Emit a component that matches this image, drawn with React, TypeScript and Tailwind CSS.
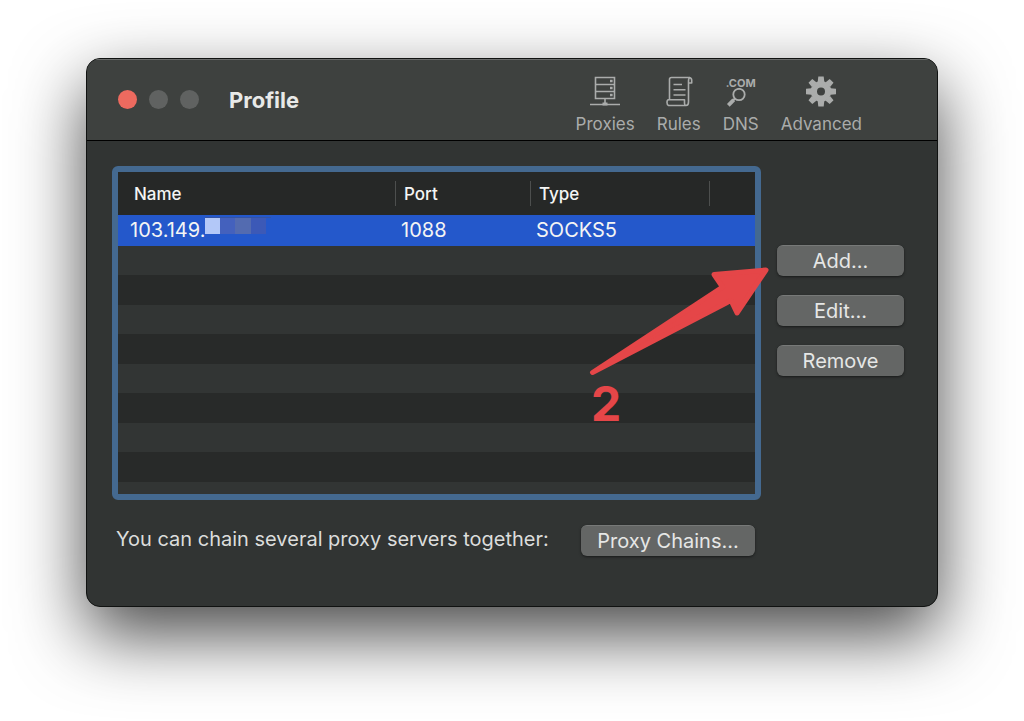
import type { ReactNode } from "react";

/* ─── Data ─────────────────────────────────────────────────────────── */
interface Proxy {
  name: string;
  port: number;
  type: string;
}

const proxies: Proxy[] = [{ name: "103.149.", port: 1088, type: "SOCKS5" }];

/* ─── Toolbar icons ────────────────────────────────────────────────── */
function ServerIcon() {
  return (
    <svg viewBox="0 0 32 32" className="h-8 w-8" fill="none" stroke="currentColor" strokeWidth="1.6" aria-hidden="true">
      <path d="M6.5 2.5h19v21h-19zM6.5 9.5h19M6.5 16.5h19" />
      <path d="M16 23.5v5M1 29.5h30" />
      <path d="M21 6h2.6M21 13h2.6M21 20h2.6" strokeWidth="2.6" />
      <path d="M13.5 29h5" strokeWidth="3" />
    </svg>
  );
}

function ScrollIcon() {
  return (
    <svg viewBox="0 0 32 32" className="h-8 w-8" fill="none" stroke="currentColor" strokeWidth="1.6" strokeLinejoin="round" aria-hidden="true">
      <path d="M6.5 24.5V4.5q0-2 2-2H26.5q2.2.4 2.2 2.8V8H25.500" />
      <path d="M27 2.5Q25.500 3 25.500 6v21q0 3.500-2.500 3.500H5.500Q4 30 4 27.500t1.500-2.700H21.500v3.500q.3 2.200 1.500 2.200" />
      <path d="M10.500 9.500h8.500M10.500 14.800h12M10.500 20h12" />
    </svg>
  );
}

function DnsIcon() {
  return (
    <span className="flex h-8 w-8 flex-col items-center">
      <span className="pt-[3px] text-[11px] leading-[10px] font-bold">.COM</span>
      <svg viewBox="0 0 32 20" className="h-5 w-8 shrink-0" fill="none" stroke="currentColor" aria-hidden="true">
        <circle cx="14" cy="6.500" r="5.700" strokeWidth="1.800" />
        <path d="M10 10.500l-2 2" strokeWidth="2.200" />
        <path d="M8.700 11.800L3.300 17.300" strokeWidth="3.800" />
      </svg>
    </span>
  );
}

const teeth = [0, 45, 90, 135, 180, 225, 270, 315];

function GearIcon() {
  return (
    <svg viewBox="0 0 32 32" className="h-8 w-8" fill="currentColor" aria-hidden="true">
      <circle cx="16" cy="16.500" r="7.200" fill="none" stroke="currentColor" strokeWidth="6.400" />
      {teeth.map((angle) => (
        <path key={angle} d="M13.300 1.500h5.400l.6 5.500h-6.600z" transform={`rotate(${angle} 16 16.500)`} />
      ))}
    </svg>
  );
}

/* ─── Controls ─────────────────────────────────────────────────────── */
function ToolbarButton({ label, children }: { label: string; children: ReactNode }) {
  return (
    <button type="button" className="flex flex-col items-center gap-[7px] text-[17px] leading-5 text-[#aaacab]">
      {children}
      {label}
    </button>
  );
}

function PushButton({ className, children }: { className: string; children: ReactNode }) {
  return (
    <button
      type="button"
      className={`h-[31px] rounded-md border-t border-[#777978] bg-[#646665] text-xl leading-7 text-[#e6e7e6] shadow-sm shadow-black/40 ${className}`}
    >
      {children}
    </button>
  );
}

function HeaderCell({ className, children }: { className: string; children?: ReactNode }) {
  return (
    <th scope="col" className={`p-0 text-left font-medium ${className}`}>
      <div className="border-r border-[#4d4f4e] pt-[2px] leading-[23px]">{children}</div>
    </th>
  );
}

/* Pixelated patch that hides the rest of the address */
function Mosaic() {
  return (
    <span className="flex h-[17px] w-[66px] border-t border-[#3453a5]" aria-hidden="true">
      <span className="h-4 w-[15px] bg-[#b3c8f8]" />
      <span className="h-4 w-[15px] bg-[#4461bd]" />
      <span className="h-4 w-[16px] bg-[#536bb0]" />
      <span className="h-4 w-[15px] bg-[#3c59b7]" />
    </span>
  );
}

function ProxyTable() {
  return (
    <div className="h-[334px] min-w-0 flex-1 rounded-md border-6 border-[#446990] bg-[#282a29]">
      <div className="flex h-full flex-col">
        <table className="w-full table-fixed border-collapse text-[#f4f5f4]">
          <thead className="h-[43px] bg-[#262827] text-[17px]">
            <tr>
              <HeaderCell className="w-auto">
                <span className="pl-4">Name</span>
              </HeaderCell>
              <HeaderCell className="w-[135px]">
                <span className="pl-2">Port</span>
              </HeaderCell>
              <HeaderCell className="w-[179px]">
                <span className="pl-2">Type</span>
              </HeaderCell>
              <td className="w-[45px]" />
            </tr>
          </thead>
          <tbody className="text-xl leading-[31px]">
            {proxies.map((proxy) => (
              <tr key={proxy.name} className="bg-[#2458cb]" aria-selected="true">
                <td className="p-0 pl-3">
                  <div className="flex h-[31px] items-start">
                    <span>{proxy.name}</span>
                    <span className="pt-[2px]">
                      <Mosaic />
                    </span>
                  </div>
                </td>
                <td className="p-0 pl-[5px]">{proxy.port}</td>
                <td className="p-0 pl-[5px]">{proxy.type}</td>
                <td />
              </tr>
            ))}
          </tbody>
        </table>
        <div className="flex-1 bg-[repeating-linear-gradient(to_bottom,#323534_0px,#323534_29px,#282a29_29px,#282a29_59px)]" />
      </div>
    </div>
  );
}

/* Step marker pointing at the Add button */
function StepCallout() {
  return (
    <div className="pointer-events-none absolute top-[120px] right-[164px] w-[188px] text-[#e54648]">
      <svg viewBox="0 0 188 118" className="block h-[118px] w-[188px]" fill="currentColor" stroke="currentColor" strokeWidth="5" strokeLinejoin="round" aria-hidden="true">
        <path d="M181 9L129 13.500L137.500 26L7.500 111.500L146 39.500L152 52z" />
      </svg>
      <span className="block pl-1.5 text-[48px] leading-[50px] font-bold">2</span>
    </div>
  );
}

/* ─── Profile window ───────────────────────────────────────────────── */
export default function App() {
  return (
    <main className="min-h-screen overflow-hidden bg-white px-[86px] pt-[58px] pb-[115px] font-[Inter,sans-serif]">
      <section
        aria-labelledby="window-title"
        className="overflow-hidden rounded-[14px] border border-[#101211] bg-[#313433] shadow-[0_28px_70px_rgba(0,0,0,0.72)]"
      >
        <header className="flex h-[82px] items-start border-b border-black bg-[#3e413f] pr-[75px] pl-[31px] inset-shadow-[0_1px_0_#6b6d6c]">
          <div className="flex gap-3 pt-[31px]">
            <button type="button" aria-label="Close" className="h-[19px] w-[19px] rounded-full bg-[#ed6a5f]" />
            <button type="button" aria-label="Minimize" className="h-[19px] w-[19px] rounded-full bg-[#606261]" />
            <button type="button" aria-label="Zoom" className="h-[19px] w-[19px] rounded-full bg-[#606261]" />
          </div>
          <h1 id="window-title" className="pt-[26px] pl-[30px] text-[22px] leading-[30px] font-bold text-[#e8e9e8]">
            Profile
          </h1>
          <nav aria-label="Profile sections" className="ml-auto flex gap-[22px] pt-4">
            <ToolbarButton label="Proxies">
              <ServerIcon />
            </ToolbarButton>
            <ToolbarButton label="Rules">
              <ScrollIcon />
            </ToolbarButton>
            <ToolbarButton label="DNS">
              <DnsIcon />
            </ToolbarButton>
            <ToolbarButton label="Advanced">
              <GearIcon />
            </ToolbarButton>
          </nav>
        </header>

        <div className="relative pt-[25px] pr-[33px] pb-[50px] pl-[25px]">
          <div className="flex gap-4">
            <ProxyTable />
            <div className="flex w-[127px] flex-col gap-[19px] pt-[79px]">
              <PushButton className="w-full">Add...</PushButton>
              <PushButton className="w-full">Edit...</PushButton>
              <PushButton className="w-full">Remove</PushButton>
            </div>
          </div>
          <div className="mr-[149px] flex items-start justify-between pt-[25px] pl-1">
            <p className="text-xl leading-7 text-[#dcdddc]">You can chain several proxy servers together:</p>
            <PushButton className="w-[174px]">Proxy Chains...</PushButton>
          </div>
          <StepCallout />
        </div>
      </section>
    </main>
  );
}
